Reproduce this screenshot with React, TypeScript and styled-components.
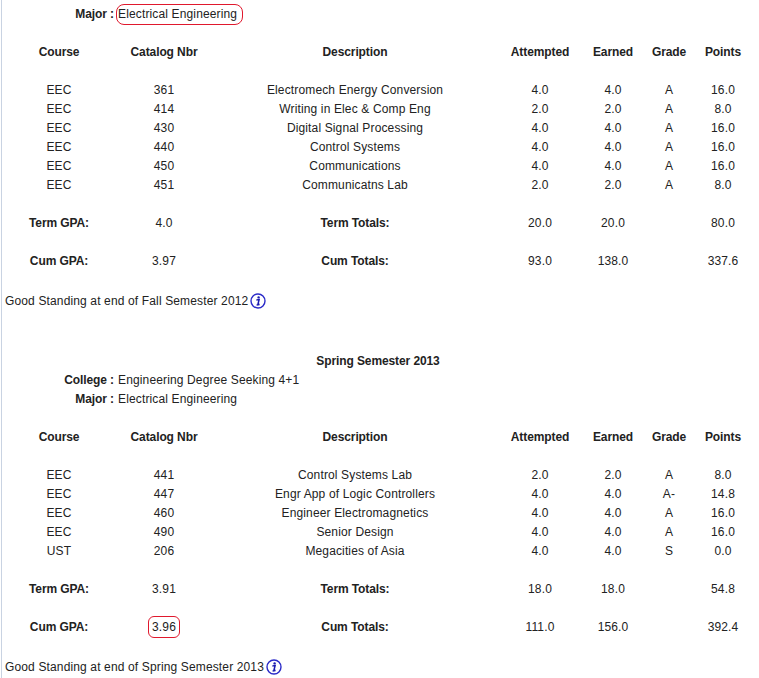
import React from "react";
import styled, { createGlobalStyle } from "styled-components";

const Global = createGlobalStyle`
  html, body { margin: 0; padding: 0; background: #fff; }
  body { font-family: "Liberation Sans", Arial, sans-serif; font-size: 12px; color: #222; letter-spacing: 0.14px; }
`;

const Page = styled.div`
  width: 759px;
  height: 678px;
  overflow: hidden;
  box-sizing: border-box;
  padding-top: 5px;
  position: relative;
  background: linear-gradient(to right, #fff 1px, #c9d3e2 1px, #c9d3e2 2px, #fff 2px);
`;

const InfoRow = styled.div`
  display: grid;
  grid-template-columns: 114px auto;
  column-gap: 4px;
  height: 19px;
  line-height: 19px;
`;

const InfoLabel = styled.span`
  font-weight: bold;
  letter-spacing: -0.1px;
  text-align: right;
  white-space: nowrap;
`;

const InfoValue = styled.span`
  white-space: nowrap;
`;

const OvalMark = styled.span`
  display: inline-block;
  box-sizing: border-box;
  height: 21px;
  line-height: 19px;
  padding: 0 5px 0 1px;
  margin: -1px 0 -1px -2px;
  border: 1px solid #e0182d;
  border-radius: 8px;
`;

const Grid = styled.div<{ $top?: number }>`
  display: grid;
  grid-template-columns: 120px 88px 294px 76px 70px 42px 66px;
  height: 19px;
  line-height: 19px;
  margin-top: ${(p) => p.$top ?? 0}px;
`;

const Cell = styled.div<{ $bold?: boolean }>`
  text-align: center;
  white-space: nowrap;
  font-weight: ${(p) => (p.$bold ? "bold" : "normal")};
  letter-spacing: ${(p) => (p.$bold ? "-0.1px" : "0.14px")};
  &:first-child { padding-right: 2px; }
`;

const BoxMark = styled.span`
  display: inline-block;
  box-sizing: border-box;
  width: 32px;
  height: 22px;
  line-height: 20px;
  margin: -2px 0;
  border: 1px solid #e0182d;
  border-radius: 6px;
`;

const Standing = styled.div<{ $top: number }>`
  display: flex;
  align-items: center;
  gap: 2px;
  height: 19px;
  margin-top: ${(p) => p.$top}px;
  padding-left: 5px;
  white-space: nowrap;
`;

const SemesterTitle = styled.div<{ $top: number }>`
  height: 19px;
  line-height: 19px;
  margin-top: ${(p) => p.$top}px;
  text-align: center;
  width: 756px;
  font-weight: bold;
  letter-spacing: -0.1px;
`;

const InfoIcon = () => (
  <svg width="16" height="16" viewBox="0 0 16 16" aria-hidden="true">
    <circle cx="8" cy="8" r="7" fill="#fff" stroke="#2a2ac8" strokeWidth="1.4" />
    <circle cx="8.6" cy="4.4" r="1.2" fill="#1a1ab0" />
    <path d="M6.4 6.9 L9.1 6.6 L8 11 Q7.9 11.7 9.4 11.2 M6.6 11.9 L9.6 11.6" fill="none" stroke="#1a1ab0" strokeWidth="1.5" />
  </svg>
);

const heads = ["Course", "Catalog Nbr", "Description", "Attempted", "Earned", "Grade", "Points"];

const Head = ({ top }: { top: number }) => (
  <Grid $top={top}>
    {heads.map((h) => (
      <Cell key={h} $bold>{h}</Cell>
    ))}
  </Grid>
);

const Rows = ({ rows }: { rows: string[][] }) => (
  <>
    {rows.map((r, i) => (
      <Grid key={r[1]} $top={i === 0 ? 19 : 0}>
        {r.map((c, j) => (
          <Cell key={j}>{c}</Cell>
        ))}
      </Grid>
    ))}
  </>
);

const Total = ({ label, gpa, total, a, e, p, mark }: { label: string; gpa: string; total: string; a: string; e: string; p: string; mark?: boolean }) => (
  <Grid $top={19}>
    <Cell $bold>{label}</Cell>
    <Cell>{mark ? <BoxMark>{gpa}</BoxMark> : gpa}</Cell>
    <Cell $bold>{total}</Cell>
    <Cell>{a}</Cell>
    <Cell>{e}</Cell>
    <Cell />
    <Cell>{p}</Cell>
  </Grid>
);

const fall = [
  ["EEC", "361", "Electromech Energy Conversion", "4.0", "4.0", "A", "16.0"],
  ["EEC", "414", "Writing in Elec & Comp Eng", "2.0", "2.0", "A", "8.0"],
  ["EEC", "430", "Digital Signal Processing", "4.0", "4.0", "A", "16.0"],
  ["EEC", "440", "Control Systems", "4.0", "4.0", "A", "16.0"],
  ["EEC", "450", "Communications", "4.0", "4.0", "A", "16.0"],
  ["EEC", "451", "Communicatns Lab", "2.0", "2.0", "A", "8.0"],
];

const spring = [
  ["EEC", "441", "Control Systems Lab", "2.0", "2.0", "A", "8.0"],
  ["EEC", "447", "Engr App of Logic Controllers", "4.0", "4.0", "A-", "14.8"],
  ["EEC", "460", "Engineer Electromagnetics", "4.0", "4.0", "A", "16.0"],
  ["EEC", "490", "Senior Design", "4.0", "4.0", "A", "16.0"],
  ["UST", "206", "Megacities of Asia", "4.0", "4.0", "S", "0.0"],
];

export default function App() {
  return (
    <Page>
      <Global />
      <InfoRow>
        <InfoLabel>Major :</InfoLabel>
        <InfoValue><OvalMark>Electrical Engineering</OvalMark></InfoValue>
      </InfoRow>
      <Head top={19} />
      <Rows rows={fall} />
      <Total label="Term GPA:" gpa="4.0" total="Term Totals:" a="20.0" e="20.0" p="80.0" />
      <Total label="Cum GPA:" gpa="3.97" total="Cum Totals:" a="93.0" e="138.0" p="337.6" />
      <Standing $top={20}>Good Standing at end of Fall Semester 2012 <InfoIcon /></Standing>
      <SemesterTitle $top={42}>Spring Semester 2013</SemesterTitle>
      <InfoRow>
        <InfoLabel>College :</InfoLabel>
        <InfoValue>Engineering Degree Seeking 4+1</InfoValue>
      </InfoRow>
      <InfoRow>
        <InfoLabel>Major :</InfoLabel>
        <InfoValue>Electrical Engineering</InfoValue>
      </InfoRow>
      <Head top={19} />
      <Rows rows={spring} />
      <Total label="Term GPA:" gpa="3.91" total="Term Totals:" a="18.0" e="18.0" p="54.8" />
      <Total label="Cum GPA:" gpa="3.96" total="Cum Totals:" a="111.0" e="156.0" p="392.4" mark />
      <Standing $top={20}>Good Standing at end of Spring Semester 2013 <InfoIcon /></Standing>
    </Page>
  );
}
